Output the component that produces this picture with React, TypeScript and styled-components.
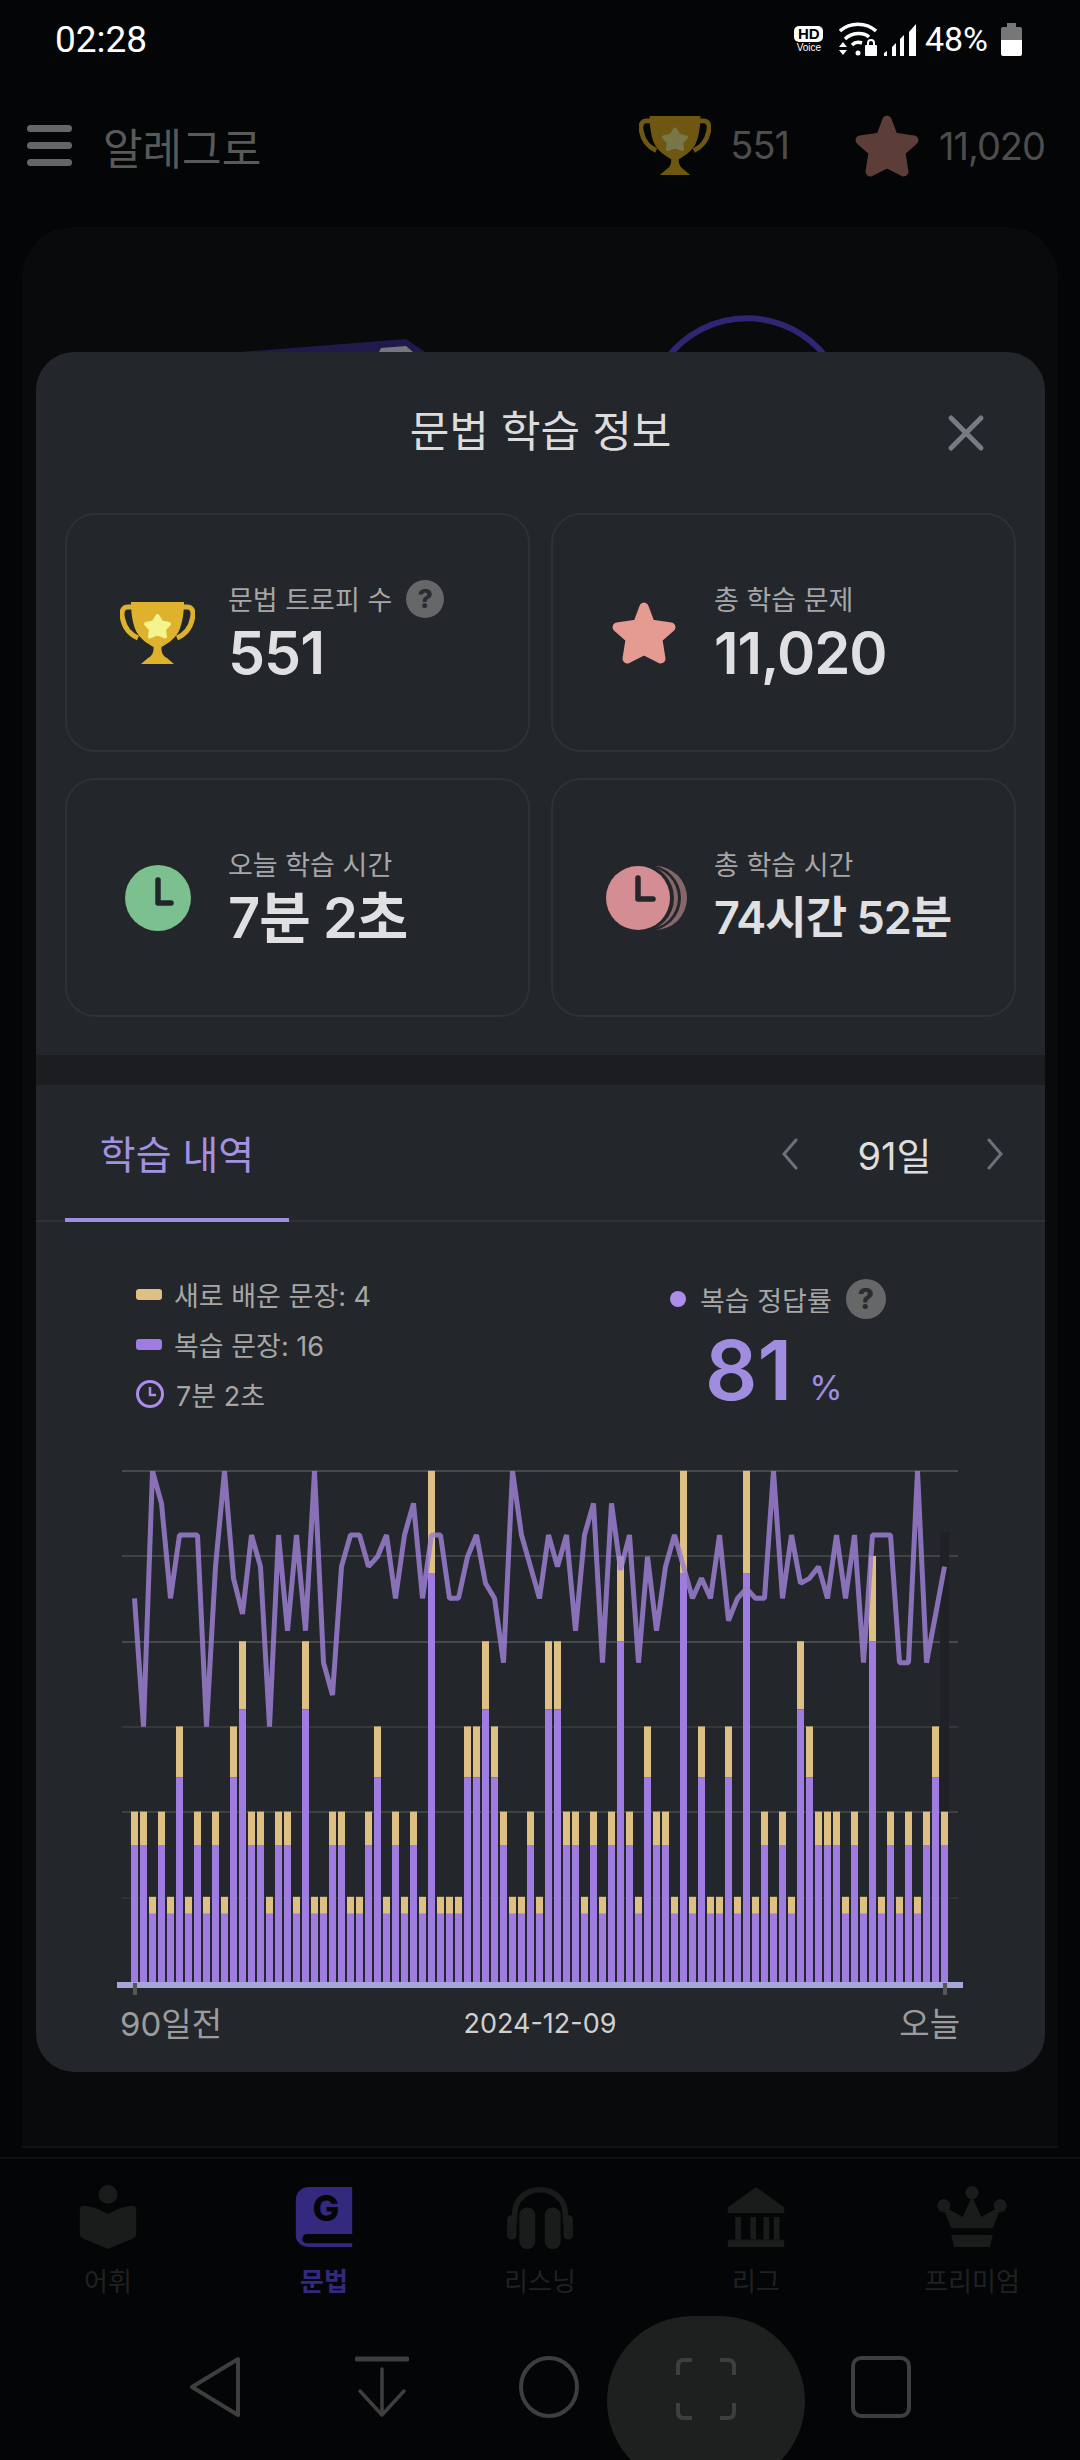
import React from "react";
import styled, {createGlobalStyle} from "styled-components";

const FONT = `"Inter", "Noto Sans CJK KR", sans-serif`;

const GlobalStyle = createGlobalStyle`
  html, body {
    margin: 0;
    padding: 0;
    background: #040506;
    font-family: ${FONT};
  }
`;

// stacked bar level per day, 1 level = 20 sentences (16 review + 4 new)
const LEVELS = [
    2, 2, 1, 2, 1, 3, 1, 2, 1, 2, 1, 3, 4, 2, 2, 1, 2, 2, 1, 4, 1, 1, 2, 2, 1, 1, 2, 3, 1, 2,
    1, 2, 1, 6, 1, 1, 1, 3, 3, 4, 3, 2, 1, 1, 2, 1, 4, 4, 2, 2, 1, 2, 1, 2, 5, 2, 1, 3, 2, 2,
    1, 6, 1, 3, 1, 1, 3, 1, 6, 1, 2, 1, 2, 1, 4, 3, 2, 2, 2, 1, 2, 1, 5, 1, 2, 1, 2, 1, 2, 3, 2,
];

// answer rate line, y offsets from the 1440 line x3
const RATE = [
    475, 860, 93, 190, 475, 285, 285, 285, 860, 380, 93, 415, 522, 285, 380, 860, 285, 572, 285, 572,
    93, 668, 765, 380, 285, 285, 380, 350, 285, 475, 285, 190, 475, 285, 285, 475, 475, 350, 285, 430,
    475, 668, 93, 285, 380, 475, 285, 380, 285, 572, 285, 190, 668, 190, 390, 285, 668, 350, 572, 380,
    285, 380, 475, 415, 475, 285, 542, 475, 445, 475, 475, 93, 475, 285, 430, 415, 380, 475, 285, 475,
    285, 668, 285, 285, 285, 668, 668, 93, 668, 525, 380,
];

const GRID = [
    {y: 1471, color: "#45494c"},
    {y: 1556, color: "#3f4346"},
    {y: 1642, color: "#45494c"},
    {y: 1727, color: "#34383a"},
    {y: 1812, color: "#3d4144"},
    {y: 1898, color: "#2e3134"},
];

const BASE_Y = 1982;
const UNIT = 85.2;

const Page = styled.div`
  position: relative;
  width: 1080px;
  height: 2460px;
  display: flex;
  flex-direction: column;
  overflow: hidden;
  background: #040506;
`;

const StatusBar = styled.div`
  height: 72px;
  flex: none;
  display: flex;
  align-items: center;
  padding: 6px 58px 0 55px;
  box-sizing: border-box;
  color: #fff;
  font-family: Roboto, sans-serif;
`;

const Clock = styled.div`
  font-size: 37px;
  flex: 1;
`;

const StatusIcons = styled.div`
  display: flex;
  align-items: center;
`;

const HdVoice = styled.div`
  width: 30px;
  display: flex;
  flex-direction: column;
  align-items: center;
  margin-right: 15px;
`;

const HdBadge = styled.div`
  width: 29px;
  height: 16px;
  background: #fff;
  border-radius: 5px;
  color: #000;
  font: 900 15px/16px "Liberation Sans", sans-serif;
  text-align: center;
`;

const VoiceText = styled.div`
  font: 400 10px/11px "Liberation Sans", sans-serif;
`;

const Percent = styled.div`
  font-size: 34px;
  margin: 0 13px 0 8px;
`;

const Battery = styled.div`
  position: relative;
  width: 21px;
  height: 29px;
  margin-top: 4px;
  border-radius: 2px;
  background: linear-gradient(#777 0 45%, #fff 45%);

  &::before {
    content: "";
    position: absolute;
    left: 6px;
    top: -4px;
    width: 9px;
    height: 4px;
    background: #777;
  }
`;

const Header = styled.div`
  height: 155px;
  flex: none;
  display: flex;
  align-items: center;
  padding: 0 35px 8px 27px;
  box-sizing: border-box;
`;

const Burger = styled.div`
  width: 45px;
  height: 41px;
  display: flex;
  flex-direction: column;
  justify-content: space-between;
  margin-right: 31px;

  i {
    display: block;
    height: 7px;
    border-radius: 4px;
    background: #666;
  }
`;

const AppName = styled.div`
  flex: 1;
  font-size: 43px;
  color: #595959;
`;

const HeaderStat = styled.div<{ $left: number }>`
  display: flex;
  align-items: center;
  gap: 19px;
  margin-left: ${p => p.$left}px;
  font-size: 38px;
  letter-spacing: -1px;
  color: #4d4d4d;
`;

const BackCard = styled.div`
  position: relative;
  flex: 1;
  margin: 0 22px;
  border-radius: 50px 50px 0 0;
  background: #090a0b;
  border-bottom: 2px solid #101213;
`;

const BackArt = styled.svg`
  position: absolute;
  left: 0;
  top: 0;
`;

const TabBar = styled.div`
  margin-top: 9px;
  height: 143px;
  flex: none;
  display: grid;
  grid-template-columns: repeat(5, 216px);
  border-top: 2px solid #0f1112;
  box-sizing: border-box;
`;

const TabItem = styled.div<{ $active?: boolean }>`
  display: flex;
  flex-direction: column;
  align-items: center;
  padding-top: 26px;
  height: 143px;
  box-sizing: border-box;
  font-size: 26px;
  line-height: 40px;
  font-weight: ${p => (p.$active ? 700 : 400)};
  color: ${p => (p.$active ? "#33297f" : "#202122")};

  svg {
    display: block;
    margin-bottom: 13px;
  }
`;

const SystemBar = styled.div`
  height: 160px;
  flex: none;
  display: flex;
  align-items: flex-start;
  padding: 16px 0 0 188px;
  box-sizing: border-box;
`;

const SysIcon = styled.svg<{ $left: number }>`
  flex: none;
  margin: 40px 0 0 ${p => p.$left}px;
`;

const SysPill = styled.div`
  width: 198px;
  height: 170px;
  flex: none;
  margin-left: 28px;
  display: flex;
  justify-content: center;
  padding-top: 42px;
  box-sizing: border-box;
  border-radius: 96px;
  background: #1e1f1f;
`;

const Sheet = styled.div`
  position: absolute;
  left: 36px;
  top: 352px;
  width: 1009px;
  height: 1720px;
  border-radius: 38px;
  background: #23262a;
  overflow: hidden;
`;

const SheetHead = styled.div`
  position: relative;
  height: 161px;
  display: flex;
  justify-content: center;
  padding-top: 50px;
  box-sizing: border-box;
  font-size: 43px;
  line-height: 58px;
  font-weight: 400;
  color: #dcdcdc;
`;

const CloseButton = styled.svg`
  position: absolute;
  right: 60px;
  top: 62px;
`;

const CardGrid = styled.div`
  display: grid;
  grid-template-columns: 465px 465px;
  grid-auto-rows: 239px;
  gap: 26px 21px;
  padding: 0 29px;
`;

const StatCard = styled.div`
  display: flex;
  align-items: center;
  border: 2px solid #2e3135;
  border-radius: 30px;
  box-sizing: border-box;
`;

const IconSlot = styled.div`
  width: 161px;
  flex: none;
  display: flex;
  justify-content: center;
  padding-left: 20px;
  box-sizing: border-box;
`;

const CardText = styled.div`
  display: flex;
  flex-direction: column;
`;

const CardLabel = styled.div`
  display: flex;
  align-items: center;
  gap: 14px;
  height: 40px;
  font-size: 27px;
  color: #a6a6a8;
`;

const CardValue = styled.div<{ $size: number }>`
  height: 68px;
  line-height: 68px;
  font-size: ${p => p.$size}px;
  font-weight: 600;
  letter-spacing: -1px;
  color: #e0e0e2;
`;

const HelpDot = styled.span<{ $size: number; $left?: number }>`
  width: ${p => p.$size}px;
  height: ${p => p.$size}px;
  flex: none;
  margin-left: ${p => p.$left ?? 0}px;
  border-radius: 50%;
  background: #666768;
  color: #2a2c2f;
  font-size: ${p => p.$size - 12}px;
  font-weight: 800;
  line-height: ${p => p.$size}px;
  text-align: center;
`;

const Band = styled.div`
  height: 30px;
  margin-top: 38px;
  background: #1b1d20;
`;

const TabsRow = styled.div`
  height: 137px;
  display: flex;
  align-items: flex-start;
  padding: 0 41px 0 29px;
  box-sizing: border-box;
  border-bottom: 2px solid #2e3135;
`;

const ActiveTab = styled.div`
  width: 224px;
  height: 137px;
  box-sizing: border-box;
  padding-top: 43px;
  text-align: center;
  font-size: 39px;
  line-height: 54px;
  font-weight: 400;
  color: #a391e2;
  border-bottom: 4px solid #a08de0;
`;

const RangePicker = styled.div`
  margin-left: auto;
  display: flex;
  align-items: center;
  height: 137px;
  box-sizing: border-box;
`;

const RangeValue = styled.div`
  width: 187px;
  padding-left: 4px;
  box-sizing: border-box;
  text-align: center;
  font-size: 38px;
  color: #dedede;
`;

const Summary = styled.div`
  display: flex;
  height: 238px;
  padding: 47px 0 0 100px;
  box-sizing: border-box;
`;

const Legend = styled.div`
  width: 534px;
  display: flex;
  flex-direction: column;
`;

const LegendRow = styled.div`
  height: 50px;
  display: flex;
  align-items: center;
  gap: 12px;
  font-size: 27px;
  color: #a6a6a6;
`;

const Swatch = styled.span<{ $color: string }>`
  width: 26px;
  height: 11px;
  border-radius: 3px;
  background: ${p => p.$color};
`;

const RateBox = styled.div`
  display: flex;
  flex-direction: column;
`;

const RateHead = styled.div`
  display: flex;
  align-items: center;
  height: 50px;
  margin-top: 5px;
  font-size: 27px;
  color: #a6a6a6;
`;

const RateDot = styled.span`
  width: 16px;
  height: 16px;
  margin-right: 14px;
  border-radius: 50%;
  background: #ad8cea;
`;

const RateValue = styled.div`
  display: flex;
  align-items: baseline;
  margin: 6px 0 0 35px;
  font-size: 82px;
  line-height: 82px;
  font-weight: 600;
  color: #a08de0;

  small {
    margin-left: 17px;
    font-size: 34px;
    font-weight: 400;
  }
`;

const ChartSvg = styled.svg`
  display: block;
`;

const AxisLabels = styled.div`
  display: grid;
  grid-template-columns: 1fr auto 1fr;
  align-items: center;
  height: 44px;
  padding: 0 85px 0 84px;
  margin-top: -2px;
  font-size: 33px;
  color: #9c9c9c;

  span:last-child {
    text-align: right;
  }
`;

const AxisDate = styled.span`
  margin-top: 2px;
  font-size: 27px;
  color: #d0d0d0;
`;

function Trophy({cup, star, width = 75}: { cup: string; star: string; width?: number }) {
    return (
        <svg width={width} height={(width * 62) / 75} viewBox="0 0 75 62">
            <path d="M13 5H8C3 5 1 9 2.500 16C4 24 9 32 18 36M62 5H67C72 5 74 9 72.500 16C71 24 66 32 57 36" fill="none"
                  stroke={cup} strokeWidth="5"/>
            <path
                d="M11 0H64C64 8 63 20 59 29C55 37 47 42 41.500 45C41 50 43 54 47 56L54 62H21L28 56C32 54 34 50 33.500 45C28 42 20 37 16 29C12 20 11 8 11 0Z"
                fill={cup}/>
            <polygon points="37.500,14 41.500,20.500 49,22 44,27.500 45,34.500 37.500,31.500 30,34.500 31,27.500 26,22 33.500,20.500"
                     fill={star} stroke={star} strokeWidth="4" strokeLinejoin="round"/>
        </svg>
    );
}

function Star({color, width, height}: { color: string; width: number; height: number }) {
    return (
        <svg width={width} height={height} viewBox="0 0 63 59">
            <polygon points="31.500,5 37.500,21 57,24 44.500,35 47.500,54 31.500,46 15.500,54 18.500,35 6,24 25.500,21"
                     fill={color} stroke={color} strokeWidth="9" strokeLinejoin="round"/>
        </svg>
    );
}

function GreenClock() {
    return (
        <svg width="66" height="66" viewBox="0 0 66 66">
            <circle cx="33" cy="33" r="33" fill="#7cc090"/>
            <path d="M33 15V38H46" fill="none" stroke="#23262a" strokeWidth="5.500" strokeLinecap="round"
                  strokeLinejoin="round"/>
        </svg>
    );
}

function StackedClock() {
    return (
        <svg width="88" height="66" viewBox="0 0 88 66">
            <circle cx="55" cy="33" r="32" fill="#86676a"/>
            <circle cx="48" cy="33" r="33" fill="#23262a"/>
            <circle cx="47" cy="33" r="31" fill="#86676a"/>
            <circle cx="40" cy="33" r="34" fill="#23262a"/>
            <circle cx="38" cy="33" r="32" fill="#d48e93"/>
            <path d="M38 13V34H53" fill="none" stroke="#23262a" strokeWidth="5.500" strokeLinecap="round"
                  strokeLinejoin="round"/>
        </svg>
    );
}

function Chevron({dir}: { dir: "left" | "right" }) {
    const d = dir === "left" ? "M15 2L3 16L15 30" : "M3 2L15 16L3 30";
    return (
        <svg width="18" height="32" viewBox="0 0 18 32">
            <path d={d} fill="none" stroke="#6c7278" strokeWidth="3" strokeLinecap="round"/>
        </svg>
    );
}

function Chart() {
    const line = RATE.map((v, i) => `${134.5 + 9 * i},${1440 + v / 3}`).join(" ");
    return (
        <ChartSvg width="1009" height="540" viewBox="36 1460 1009 540">
            <defs>
                <clipPath id="plot">
                    <rect x="36" y="1471" width="1009" height="520"/>
                </clipPath>
            </defs>
            {GRID.map(g => <rect key={g.y} x="122" y={g.y - 1} width="836" height="2" fill={g.color}/>)}
            <rect x="940" y="1532" width="9" height="280" fill="#1f2124"/>
            {LEVELS.map((lv, i) => {
                const total = lv * UNIT;
                const review = total * 0.8;
                const x = 131 + 9 * i;
                return (
                    <g key={i}>
                        <rect x={x} y={BASE_Y - total} width="7" height={total - review} fill="#dfc084"/>
                        <rect x={x} y={BASE_Y - review} width="7" height={review} fill="#9f7ce0"/>
                    </g>
                );
            })}
            <rect x="117" y="1982" width="846" height="6" fill="#a6a6d8"/>
            <rect x="133" y="1983" width="4" height="12" fill="#565656"/>
            <rect x="943" y="1983" width="4" height="12" fill="#565656"/>
            <polyline points={line} clipPath="url(#plot)" fill="none" stroke="#9a7fd0" strokeOpacity="0.85"
                      strokeWidth="5" strokeLinejoin="bevel"/>
        </ChartSvg>
    );
}

export default function App() {
    return (
        <Page>
            <GlobalStyle/>
            <StatusBar>
                <Clock>02:28</Clock>
                <StatusIcons>
                    <HdVoice>
                        <HdBadge>HD</HdBadge>
                        <VoiceText>Voice</VoiceText>
                    </HdVoice>
                    <svg width="38" height="34" viewBox="0 0 38 34">
                        <path d="M1 9C11 0 27 0 37 9" fill="none" stroke="#fff" strokeWidth="3.500"/>
                        <path d="M6 17C13 10 25 10 30 15" fill="none" stroke="#fff" strokeWidth="3.500"/>
                        <path d="M13 23C16 20 20 20 23 21" fill="none" stroke="#fff" strokeWidth="3.500"/>
                        <circle cx="19" cy="31" r="2.500" fill="#fff"/>
                        <path d="M0 25L4 20L8 25ZM0 28L4 33L8 28Z" fill="#fff"/>
                        <rect x="26" y="23" width="12" height="11" rx="1" fill="#fff"/>
                        <path d="M29 24V21C29 17 35 17 35 21V24" fill="none" stroke="#fff" strokeWidth="2"/>
                    </svg>
                    <svg width="33" height="33" viewBox="0 0 33 33" style={{marginLeft: 7}}>
                        <path d="M0 33V30L3 28V33ZM8 33V24L12 20V33ZM16 33V16L20 12V33ZM25 33V9L32 1V33Z" fill="#fff"/>
                    </svg>
                    <Percent>48%</Percent>
                    <Battery/>
                </StatusIcons>
            </StatusBar>

            <Header>
                <Burger><i/><i/><i/></Burger>
                <AppName>알레그로</AppName>
                <HeaderStat $left={0}>
                    <Trophy cup="#6e5710" star="#77774a" width={72}/>
                    551
                </HeaderStat>
                <HeaderStat $left={65}>
                    <Star color="#5c3d38" width={66} height={62}/>
                    11,020
                </HeaderStat>
            </Header>

            <BackCard>
                <BackArt width="1036" height="130" viewBox="22 227 1036 130">
                    <path d="M241 352L406 339L425 352Z" fill="#201a4a"/>
                    <path d="M379 352L381 348L406 346L413 352Z" fill="#77767e"/>
                    <path d="M668 357A100 100 0 0 1 826 357" fill="none" stroke="#2e2673" strokeWidth="6"/>
                </BackArt>
            </BackCard>

            <TabBar>
                <TabItem>
                    <svg width="60" height="68" viewBox="0 0 60 68">
                        <circle cx="30" cy="10" r="10" fill="#1a1b1b"/>
                        <path
                            d="M4 22C12 22 22 26 30 31C38 26 48 22 56 22C59 22 60 24 60 26V52C60 55 58 56 56 57L30 68L4 57C2 56 0 55 0 52V26C0 24 1 22 4 22Z"
                            fill="#1a1b1b"/>
                    </svg>
                    어휘
                </TabItem>
                <TabItem $active>
                    <svg width="60" height="68" viewBox="0 0 60 68">
                        <path d="M14 2H60V52H12C8 52 7 56 7 58C7 60 9 62 12 62H60V66H14C6 66 0 60 0 54V16C0 8 6 2 14 2Z"
                              fill="#33297f"/>
                        <text x="32" y="38" textAnchor="middle" fontFamily="Inter, sans-serif" fontSize="38"
                              fontWeight="800" fill="#040506">G
                        </text>
                    </svg>
                    문법
                </TabItem>
                <TabItem>
                    <svg width="70" height="68" viewBox="0 0 70 68">
                        <path d="M8 40V32C8 -4 62 -4 62 32V40" fill="none" stroke="#1a1b1b" strokeWidth="6"/>
                        <rect x="13" y="24" width="17" height="44" rx="8" fill="#1a1b1b"/>
                        <rect x="40" y="24" width="17" height="44" rx="8" fill="#1a1b1b"/>
                        <rect x="0" y="32" width="10" height="26" rx="5" fill="#1a1b1b"/>
                        <rect x="60" y="32" width="10" height="26" rx="5" fill="#1a1b1b"/>
                    </svg>
                    리스닝
                </TabItem>
                <TabItem>
                    <svg width="60" height="68" viewBox="0 0 60 68">
                        <path d="M30 2L60 24V30H0V24Z" fill="#1a1b1b"/>
                        <path d="M8 34H14V58H8ZM24 34H30V58H24ZM38 34H44V58H38ZM49 34H55V58H49Z" fill="#1a1b1b"/>
                        <rect x="0" y="58" width="60" height="8" rx="2" fill="#1a1b1b"/>
                    </svg>
                    리그
                </TabItem>
                <TabItem>
                    <svg width="76" height="68" viewBox="0 0 76 68">
                        <circle cx="38" cy="8" r="7" fill="#1a1b1b"/>
                        <circle cx="8" cy="22" r="7" fill="#1a1b1b"/>
                        <circle cx="68" cy="22" r="7" fill="#1a1b1b"/>
                        <path d="M38 12L48 34L62 26L68 26L60 46H16L8 26L14 26L28 34Z" fill="#1a1b1b"/>
                        <path d="M16 53H60L57 66H19Z" fill="#1a1b1b"/>
                    </svg>
                    프리미엄
                </TabItem>
            </TabBar>

            <SystemBar>
                <SysIcon $left={0} width="54" height="62" viewBox="0 0 54 62">
                    <path d="M50 3L4 31L50 59Z" fill="none" stroke="#3e3e3e" strokeWidth="4" strokeLinejoin="round"/>
                </SysIcon>
                <SysIcon $left={113} width="54" height="62" viewBox="0 0 54 62">
                    <path d="M2 3H52" fill="none" stroke="#3e3e3e" strokeWidth="5" strokeLinecap="round"/>
                    <path d="M27 13V58M5 35L27 59L49 35" fill="none" stroke="#3e3e3e" strokeWidth="3.500"
                          strokeLinecap="round" strokeLinejoin="round"/>
                </SysIcon>
                <SysIcon $left={110} width="60" height="62" viewBox="0 0 60 62">
                    <ellipse cx="30" cy="31" rx="28" ry="29" fill="none" stroke="#3e3e3e" strokeWidth="4"/>
                </SysIcon>
                <SysPill>
                    <svg width="60" height="62" viewBox="0 0 60 62">
                        <path d="M16 2H8C4 2 2 4 2 8V17M44 2H52C56 2 58 4 58 8V17M16 60H8C4 60 2 58 2 54V45M44 60H52C56 60 58 58 58 54V45"
                              fill="none" stroke="#3e3e3e" strokeWidth="4"/>
                    </svg>
                </SysPill>
                <SysIcon $left={46} width="60" height="62" viewBox="0 0 60 62">
                    <rect x="2" y="2" width="56" height="58" rx="8" fill="none" stroke="#3e3e3e" strokeWidth="4"/>
                </SysIcon>
            </SystemBar>

            <Sheet>
                <SheetHead>
                    문법 학습 정보
                    <CloseButton width="38" height="38" viewBox="0 0 38 38">
                        <path d="M4 4L34 34M34 4L4 34" stroke="#767c82" strokeWidth="5" strokeLinecap="round"/>
                    </CloseButton>
                </SheetHead>

                <CardGrid>
                    <StatCard>
                        <IconSlot><Trophy cup="#dfb22e" star="#f4f38e"/></IconSlot>
                        <CardText>
                            <CardLabel>문법 트로피 수 <HelpDot $size={38}>?</HelpDot></CardLabel>
                            <CardValue $size={59}>551</CardValue>
                        </CardText>
                    </StatCard>
                    <StatCard>
                        <IconSlot><Star color="#e39b92" width={66} height={62}/></IconSlot>
                        <CardText>
                            <CardLabel>총 학습 문제</CardLabel>
                            <CardValue $size={58}>11,020</CardValue>
                        </CardText>
                    </StatCard>
                    <StatCard>
                        <IconSlot><GreenClock/></IconSlot>
                        <CardText>
                            <CardLabel>오늘 학습 시간</CardLabel>
                            <CardValue $size={56}>7분 2초</CardValue>
                        </CardText>
                    </StatCard>
                    <StatCard>
                        <IconSlot><StackedClock/></IconSlot>
                        <CardText>
                            <CardLabel>총 학습 시간</CardLabel>
                            <CardValue $size={45}>74시간 52분</CardValue>
                        </CardText>
                    </StatCard>
                </CardGrid>

                <Band/>

                <TabsRow>
                    <ActiveTab>학습 내역</ActiveTab>
                    <RangePicker>
                        <Chevron dir="left"/>
                        <RangeValue>91일</RangeValue>
                        <Chevron dir="right"/>
                    </RangePicker>
                </TabsRow>

                <Summary>
                    <Legend>
                        <LegendRow><Swatch $color="#dfc084"/>새로 배운 문장: 4</LegendRow>
                        <LegendRow><Swatch $color="#9f7ce0"/>복습 문장: 16</LegendRow>
                        <LegendRow>
                            <svg width="28" height="30" viewBox="0 0 28 30">
                                <circle cx="14" cy="15" r="12.500" fill="none" stroke="#ad8cea" strokeWidth="3"/>
                                <path d="M14 8V16H20" fill="none" stroke="#ad8cea" strokeWidth="2.500"/>
                            </svg>
                            7분 2초
                        </LegendRow>
                    </Legend>
                    <RateBox>
                        <RateHead>
                            <RateDot/>
                            복습 정답률
                            <HelpDot $size={40} $left={14}>?</HelpDot>
                        </RateHead>
                        <RateValue>81<small>%</small></RateValue>
                    </RateBox>
                </Summary>

                <Chart/>

                <AxisLabels>
                    <span>90일전</span>
                    <AxisDate>2024-12-09</AxisDate>
                    <span>오늘</span>
                </AxisLabels>
            </Sheet>
        </Page>
    );
}
